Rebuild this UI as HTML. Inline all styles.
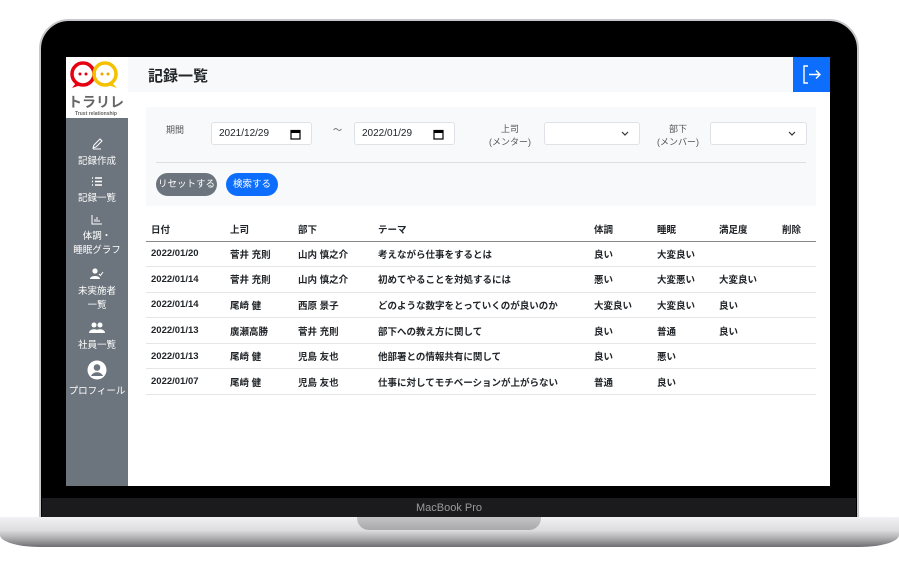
<!DOCTYPE html>
<html><head><meta charset="utf-8"><style>
*{margin:0;padding:0;box-sizing:border-box}
body{width:899px;height:571px;background:#fff;position:relative;overflow:hidden;font-family:"Liberation Sans","Noto Sans CJK JP",sans-serif;color:#212529}
.bezel{position:absolute;left:39px;top:19px;width:820px;height:505px;background:#000;border-radius:30px 30px 0 0;border:2px solid #c8c8cc}
.chin{position:absolute;left:42px;top:498px;width:814px;height:20px;background:#1b1b1d;color:#9a9a9a;font-size:11px;text-align:center;line-height:20px}
.base{position:absolute;left:0;top:517px;width:899px;height:30px;border-radius:0 0 40px 40px/0 0 12px 12px;background:linear-gradient(#f2f2f4 0%,#dcdcde 45%,#b0b0b3 70%,#6e6e72 100%)}
.notch{position:absolute;left:357px;top:517px;width:184px;height:13px;border-radius:0 0 12px 12px;background:linear-gradient(#c4c4c6,#a9a9ab)}
.screen{position:absolute;left:66px;top:57px;width:764px;height:429px;background:#fff;overflow:hidden}
.side{position:absolute;left:0;top:0;width:62px;height:429px;background:#6c757d}
.logo{position:absolute;left:0;top:0;width:62px;height:61px;background:#fff}
.nav{position:absolute;left:0;width:62px;text-align:center;color:#fff;font-size:9.5px;line-height:14px}
.hdr{position:absolute;left:62px;top:0;width:702px;height:35px;background:#f8f9fa}
.hdr h1{position:absolute;left:20px;top:8px;font-size:15px;font-weight:bold}
.out{position:absolute;right:0;top:0;width:37px;height:35px;background:#0d6efd}
.card{position:absolute;left:80px;top:50px;width:670px;height:99px;background:#f8f9fa}
.lbl{position:absolute;font-size:9px;color:#555;text-align:center;line-height:13px}
.inp{position:absolute;height:23px;background:#fff;border:1px solid #dee2e6;border-radius:3px;font-size:10px;line-height:21px;padding-left:7px}
.btn{position:absolute;height:23px;border-radius:12px;color:#fff;font-size:9.5px;line-height:23px;text-align:center}
.cal{position:absolute;right:10px;top:6px}
table{position:absolute;left:80px;top:160px;width:670px;border-collapse:collapse;font-size:9.5px}
td,th{text-align:left;height:25.6px;padding-left:5px;border-bottom:1px solid #e4e6e8;font-weight:bold;white-space:nowrap}
th{height:24px;border-bottom:1.5px solid #888}
</style></head><body>
<div class="bezel"></div>
<div class="chin">MacBook Pro</div>
<div class="base"></div><div class="notch"></div>
<div class="screen">
 <div class="side">
  <div class="logo">
   <svg width="62" height="61" viewBox="0 0 62 61">
    <circle cx="17" cy="17" r="11" fill="none" stroke="#e60012" stroke-width="3.5"/>
    <path d="M10 26 L6 31 L15 28" fill="#e60012"/>
    <circle cx="39" cy="17" r="11" fill="none" stroke="#f5c000" stroke-width="3.5"/>
    <path d="M46 26 L51 31 L42 28" fill="#f5c000"/>
    <circle cx="14" cy="17" r="1.5" fill="#e60012"/><circle cx="20" cy="17" r="1.5" fill="#e60012"/>
    <circle cx="36" cy="17" r="1.5" fill="#e6a800"/><circle cx="42" cy="17" r="1.5" fill="#e6a800"/>
    <text x="30" y="50" text-anchor="middle" font-size="14" font-weight="bold" fill="#666" font-family="Noto Sans CJK JP,sans-serif">トラリレ</text>
    <text x="30" y="58" text-anchor="middle" font-size="5" font-weight="bold" fill="#666" font-family="Liberation Sans,sans-serif">Trust relationship</text>
   </svg>
  </div>
  <div class="nav" style="top:81px"><svg width="12" height="12" viewBox="0 0 12 12"><path d="M2 10 L3 7 L9 1 L11 3 L5 9 Z M2 11 H10" stroke="#fff" fill="none"/></svg><br>記録作成</div>
  <div class="nav" style="top:119px"><svg width="12" height="11" viewBox="0 0 12 11"><path d="M1 2h1M4 2h7M1 5.5h1M4 5.5h7M1 9h1M4 9h7" stroke="#fff" stroke-width="1.5"/></svg><br>記録一覧</div>
  <div class="nav" style="top:157px"><svg width="12" height="11" viewBox="0 0 12 11"><path d="M1 1v9h10M4 8V5M6 8V3M8 8V6" stroke="#fff" fill="none"/></svg><br>体調・<br>睡眠グラフ</div>
  <div class="nav" style="top:211px"><svg width="14" height="12" viewBox="0 0 14 12"><circle cx="5" cy="3" r="2.6" fill="#fff"/><path d="M0 11c0-4 10-4 10 0z" fill="#fff"/><path d="M9 6l1.5 1.5L13 4" stroke="#fff" fill="none"/></svg><br>未実施者<br>一覧</div>
  <div class="nav" style="top:265px"><svg width="16" height="12" viewBox="0 0 16 12"><circle cx="5" cy="3" r="2.5" fill="#fff"/><circle cx="11" cy="3" r="2.5" fill="#fff"/><path d="M0 11c0-5 10-5 10 0zM6 11c0-5 10-5 10 0z" fill="#fff"/></svg><br>社員一覧</div>
  <div class="nav" style="top:303px"><svg width="20" height="20" viewBox="0 0 20 20"><circle cx="10" cy="10" r="9.5" fill="#fff"/><circle cx="10" cy="7.5" r="3.3" fill="#6c757d"/><path d="M4 16c2-5 10-5 12 0" fill="#6c757d"/></svg><br>プロフィール</div>
 </div>
 <div class="hdr"><h1>記録一覧</h1>
  <div class="out"><svg width="37" height="35" viewBox="0 0 37 35"><path d="M15 9h-4v17h4M16 17.5h11M23 13.5l4 4-4 4" stroke="#fff" stroke-width="1.4" fill="none"/></svg></div>
 </div>
 <div class="card">
  <div class="lbl" style="left:20px;top:17px">期間</div>
  <div class="inp" style="left:65px;top:15px;width:101px">2021/12/29<svg class="cal" width="11" height="11" viewBox="0 0 11 11"><rect x="1" y="1.5" width="9" height="8.5" fill="none" stroke="#000" stroke-width="1.2"/><rect x="1" y="1.5" width="9" height="2.5" fill="#000"/></svg></div>
  <div class="lbl" style="left:187px;top:17px">〜</div>
  <div class="inp" style="left:208px;top:15px;width:101px">2022/01/29<svg class="cal" width="11" height="11" viewBox="0 0 11 11"><rect x="1" y="1.5" width="9" height="8.5" fill="none" stroke="#000" stroke-width="1.2"/><rect x="1" y="1.5" width="9" height="2.5" fill="#000"/></svg></div>
  <div class="lbl" style="left:343px;top:16px">上司<br>(メンター)</div>
  <div class="inp" style="left:398px;top:15px;width:96px"><svg style="position:absolute;right:10px;top:8px" width="8" height="5" viewBox="0 0 8 5"><path d="M1 1l3 3 3-3" stroke="#333" fill="none" stroke-width="1.2"/></svg></div>
  <div class="lbl" style="left:511px;top:16px">部下<br>(メンバー)</div>
  <div class="inp" style="left:564px;top:15px;width:97px"><svg style="position:absolute;right:10px;top:8px" width="8" height="5" viewBox="0 0 8 5"><path d="M1 1l3 3 3-3" stroke="#333" fill="none" stroke-width="1.2"/></svg></div>
  <div style="position:absolute;left:10px;top:55px;width:650px;border-top:1px solid #dcdfe2"></div>
  <div class="btn" style="left:10px;top:66px;width:61px;background:#6c757d">リセットする</div>
  <div class="btn" style="left:80px;top:66px;width:52px;background:#0d6efd">検索する</div>
 </div>
 <table>
  <tr><th style="width:79px">日付</th><th style="width:68px">上司</th><th style="width:80px">部下</th><th style="width:216px">テーマ</th><th style="width:63px">体調</th><th style="width:62px">睡眠</th><th style="width:63px">満足度</th><th>削除</th></tr>
  <tr><td>2022/01/20</td><td>菅井 充則</td><td>山内 慎之介</td><td>考えながら仕事をするとは</td><td>良い</td><td>大変良い</td><td></td><td></td></tr>
  <tr><td>2022/01/14</td><td>菅井 充則</td><td>山内 慎之介</td><td>初めてやることを対処するには</td><td>悪い</td><td>大変悪い</td><td>大変良い</td><td></td></tr>
  <tr><td>2022/01/14</td><td>尾崎 健</td><td>西原 景子</td><td>どのような数字をとっていくのが良いのか</td><td>大変良い</td><td>大変良い</td><td>良い</td><td></td></tr>
  <tr><td>2022/01/13</td><td>廣瀬高勝</td><td>菅井 充則</td><td>部下への教え方に関して</td><td>良い</td><td>普通</td><td>良い</td><td></td></tr>
  <tr><td>2022/01/13</td><td>尾崎 健</td><td>児島 友也</td><td>他部署との情報共有に関して</td><td>良い</td><td>悪い</td><td></td><td></td></tr>
  <tr><td>2022/01/07</td><td>尾崎 健</td><td>児島 友也</td><td>仕事に対してモチベーションが上がらない</td><td>普通</td><td>良い</td><td></td><td></td></tr>
 </table>
</div>
</body></html>
